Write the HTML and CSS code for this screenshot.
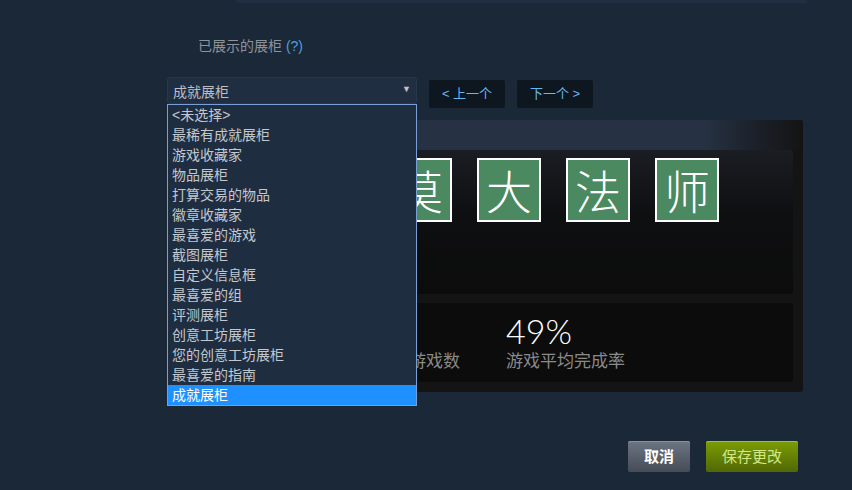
FILE: index.html
```html
<!DOCTYPE html>
<html lang="zh-CN">

<head>
    <meta charset="UTF-8">
    <meta name="viewport" content="width=device-width, initial-scale=1.0">
    <title>编辑个人资料 - 展柜</title>
    <link rel="stylesheet" href="styles.css">
</head>

<body>
    <div class="page">
        <div class="top-bar"></div>

        <div class="showcase-label">已展示的展柜 <span class="help">(?)</span></div>

        <div class="controls">
            <div class="select">
                <span class="select-value">成就展柜</span>
                <span class="select-arrow">▼</span>
                <div class="select-list">
                    <div class="option">&lt;未选择&gt;</div>
                    <div class="option">最稀有成就展柜</div>
                    <div class="option">游戏收藏家</div>
                    <div class="option">物品展柜</div>
                    <div class="option">打算交易的物品</div>
                    <div class="option">徽章收藏家</div>
                    <div class="option">最喜爱的游戏</div>
                    <div class="option">截图展柜</div>
                    <div class="option">自定义信息框</div>
                    <div class="option">最喜爱的组</div>
                    <div class="option">评测展柜</div>
                    <div class="option">创意工坊展柜</div>
                    <div class="option">您的创意工坊展柜</div>
                    <div class="option">最喜爱的指南</div>
                    <div class="option selected">成就展柜</div>
                </div>
            </div>
            <div class="nav-btn">&lt; 上一个</div>
            <div class="nav-btn">下一个 &gt;</div>
        </div>

        <div class="showcase">
            <div class="showcase-header"></div>
            <!-- 前两个成就被下拉列表挡住 -->
            <div class="achievements">
                <div class="tile"></div>
                <div class="tile"></div>
                <div class="tile">莫</div>
                <div class="tile">大</div>
                <div class="tile">法</div>
                <div class="tile">师</div>
            </div>
            <div class="stats">
                <div class="stat"></div>
                <div class="stat">
                    <div class="stat-value"></div>
                    <div class="stat-label">完美游戏数</div>
                </div>
                <div class="stat">
                    <div class="stat-value">49%</div>
                    <div class="stat-label">游戏平均完成率</div>
                </div>
            </div>
        </div>

        <div class="footer">
            <div class="btn btn-grey">取消</div>
            <div class="btn btn-green">保存更改</div>
        </div>
    </div>
</body>

</html>
```

FILE: styles.css
```css
body {
    margin: 0;
    background-color: #1b2838;
    font-family: Arial, "Noto Sans CJK SC", sans-serif;
    font-size: 14px;
}

.page {
    width: 636px;
    margin-left: 167px;
}

.top-bar {
    width: 571px;
    height: 3px;
    margin-left: 69px;
    background-color: #202e41;
}

.showcase-label {
    margin-top: 33px;
    padding-left: 31px;
    line-height: 20px;
    color: #8b939b;
}

.showcase-label .help {
    color: #4ea2d8;
}

.controls {
    display: flex;
    align-items: flex-start;
    margin-top: 21px;
}

.select {
    position: relative;
    box-sizing: border-box;
    width: 250px;
    height: 27px;
    padding: 0 5px;
    background-color: #202e42;
    border: 1px solid #26364b;
    border-radius: 3px;
    display: flex;
    align-items: center;
    justify-content: space-between;
    color: #bdbfc1;
}

.select-arrow {
    font-size: 9px;
    color: #c2c4c6;
    margin-top: -4px;
}

/* 展开的下拉列表 */
.select-list {
    position: absolute;
    top: 26px;
    left: -1px;
    width: 248px;
    background-color: #1f2d41;
    border: 1px solid #7a9fd6;
    z-index: 10;
}

.option {
    height: 20px;
    line-height: 20px;
    padding-left: 4px;
    color: #c3c8cd;
}

.option.selected {
    background-color: #1e90ff;
    color: #ffffff;
}

.nav-btn {
    box-sizing: border-box;
    width: 76px;
    height: 28px;
    margin-top: 3px;
    margin-left: 12px;
    line-height: 28px;
    text-align: center;
    font-size: 13px;
    color: #67b8ec;
    background-color: #0e161f;
    border-radius: 2px;
}

.showcase {
    box-sizing: border-box;
    width: 636px;
    margin-top: 12px;
    padding: 0 10px 10px;
    background-color: #141414;
    border-radius: 0 3px 3px 0;
}

.showcase-header {
    height: 30px;
    margin: 0 -10px;
    background: linear-gradient(to right, #263244 0%, #263244 84%, #1a1e25 94%, #141414 100%);
    border-radius: 0 3px 0 0;
}

.achievements {
    box-sizing: border-box;
    height: 144px;
    padding: 8px 0 0 33px;
    display: flex;
    align-items: flex-start;
    gap: 25px;
    background: linear-gradient(to bottom, #1a1d23 0%, #0e0f11 45%, #0c0c0c 100%);
    border-radius: 2px;
}

.tile {
    box-sizing: border-box;
    width: 64px;
    height: 64px;
    border: 2px solid #ffffff;
    background-color: #4b8961;
    color: #ffffff;
    font-family: "Noto Sans CJK SC", sans-serif;
    font-weight: 300;
    font-size: 46px;
    line-height: 58px;
    text-align: center;
}

.stats {
    box-sizing: border-box;
    height: 79px;
    margin-top: 9px;
    padding: 10px 0 0 20px;
    display: grid;
    grid-template-columns: 178px 131px 1fr;
    background-color: #0c0c0c;
    border-radius: 2px;
}

.stat-value {
    height: 36px;
    font-family: Lato, sans-serif;
    font-weight: 300;
    font-size: 34px;
    line-height: 36px;
    color: #ffffff;
}

.stat-label {
    margin-top: 1px;
    font-size: 17px;
    line-height: 24px;
    color: #8a8a8a;
}

.footer {
    display: flex;
    justify-content: flex-end;
    gap: 16px;
    margin-top: 49px;
    padding-right: 5px;
}

.btn {
    box-sizing: border-box;
    height: 31px;
    line-height: 31px;
    text-align: center;
    font-size: 15px;
    border-radius: 2px;
}

.btn-grey {
    width: 62px;
    color: #ffffff;
    font-weight: bold;
    background: linear-gradient(to bottom, #6c7380 5%, #474e5a 95%);
    box-shadow: inset 0 1px 0 #8a919c;
}

.btn-green {
    width: 92px;
    color: #d2e885;
    background: linear-gradient(to bottom, #7a9a05 5%, #536a04 95%);
    box-shadow: inset 0 1px 0 #a4c21a;
}
```
